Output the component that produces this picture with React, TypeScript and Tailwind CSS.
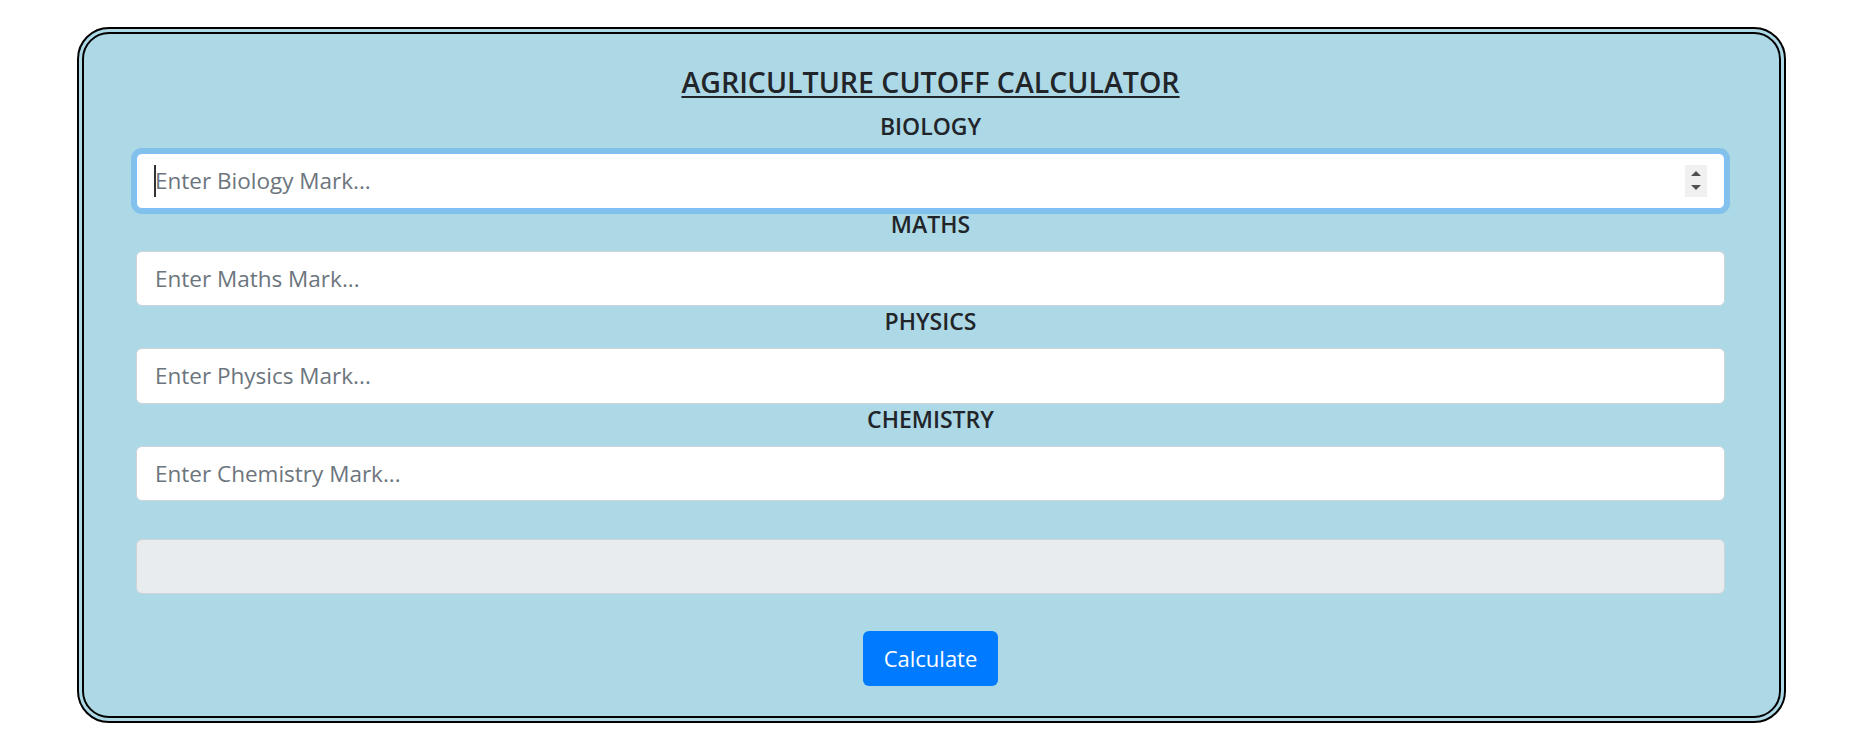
import { useState } from 'react';

const subjects = [
  { key: 'biology', label: 'BIOLOGY', placeholder: 'Enter Biology Mark...' },
  { key: 'maths', label: 'MATHS', placeholder: 'Enter Maths Mark...' },
  { key: 'physics', label: 'PHYSICS', placeholder: 'Enter Physics Mark...' },
  { key: 'chemistry', label: 'CHEMISTRY', placeholder: 'Enter Chemistry Mark...' },
];

function Spinner() {
  return (
    <div className="absolute right-[18px] top-1/2 -translate-y-1/2 w-[22px] h-[32px] bg-[#f0f0f0] flex flex-col items-center justify-center gap-[9px]">
      <div className="w-0 h-0 border-l-[5px] border-r-[5px] border-b-[5px] border-l-transparent border-r-transparent border-b-[#505050]" />
      <div className="w-0 h-0 border-l-[5px] border-r-[5px] border-t-[5px] border-l-transparent border-r-transparent border-t-[#505050]" />
    </div>
  );
}

export default function App() {
  const [marks, setMarks] = useState<Record<string, string>>({});
  const [result, setResult] = useState('');

  const calculate = () => {
    const b = Number(marks.biology || 0);
    const p = Number(marks.physics || 0);
    const c = Number(marks.chemistry || 0);
    const m = Number(marks.maths || 0);
    setResult(String(b / 2 + p / 4 + c / 4 + m / 2));
  };

  return (
    <div className="w-[1853px] h-[733px] bg-white pt-[27px] pl-[77px] font-['Open_Sans',sans-serif] text-[#212529]">
      <div className="w-[1709px] h-[696px] border-[7px] border-double border-black rounded-[32px] bg-[#add8e6] pt-[31px] pb-[30px] pl-[52px] pr-[54px] flex flex-col">
        <h1 className="h-[34px] leading-[34px] mb-[12px] text-center text-[28.5px] font-semibold underline decoration-2 underline-offset-[3px]">
          AGRICULTURE CUTOFF CALCULATOR
        </h1>

        {subjects.map((s, i) => (
          <div key={s.key} className="flex flex-col">
            <label className="h-[30px] leading-[30px] mb-[12px] text-center text-[23px] font-semibold">{s.label}</label>
            <div className="relative">
              <input
                type="text"
                value={marks[s.key] || ''}
                onChange={(e) => setMarks({ ...marks, [s.key]: e.target.value })}
                placeholder={s.placeholder}
                className={`w-full h-[55.5px] rounded-[6px] bg-white px-[18px] text-[22.5px] text-[#495057] placeholder:text-[#6c757d] outline-none border ${
                  i === 0 ? 'border-[#80bdff] shadow-[0_0_0_5px_rgba(0,123,255,0.25)]' : 'border-[#ced4da]'
                }`}
              />
              {i === 0 && (
                <>
                  <span className="absolute left-[18px] top-1/2 -translate-y-1/2 w-[2px] h-[32px] bg-[#333]" />
                  <Spinner />
                </>
              )}
            </div>
          </div>
        ))}

        <div className="mt-[37.5px] h-[55.5px] rounded-[6px] bg-[#e9ecef] border border-[#ced4da] px-[18px] text-[22.5px] leading-[53px] text-[#495057]">
          {result}
        </div>

        <div className="mt-[37px] flex justify-center">
          <button
            onClick={calculate}
            className="h-[55px] w-[135px] rounded-[6px] bg-[#007bff] text-white text-[22px]"
          >
            Calculate
          </button>
        </div>
      </div>
    </div>
  );
}
